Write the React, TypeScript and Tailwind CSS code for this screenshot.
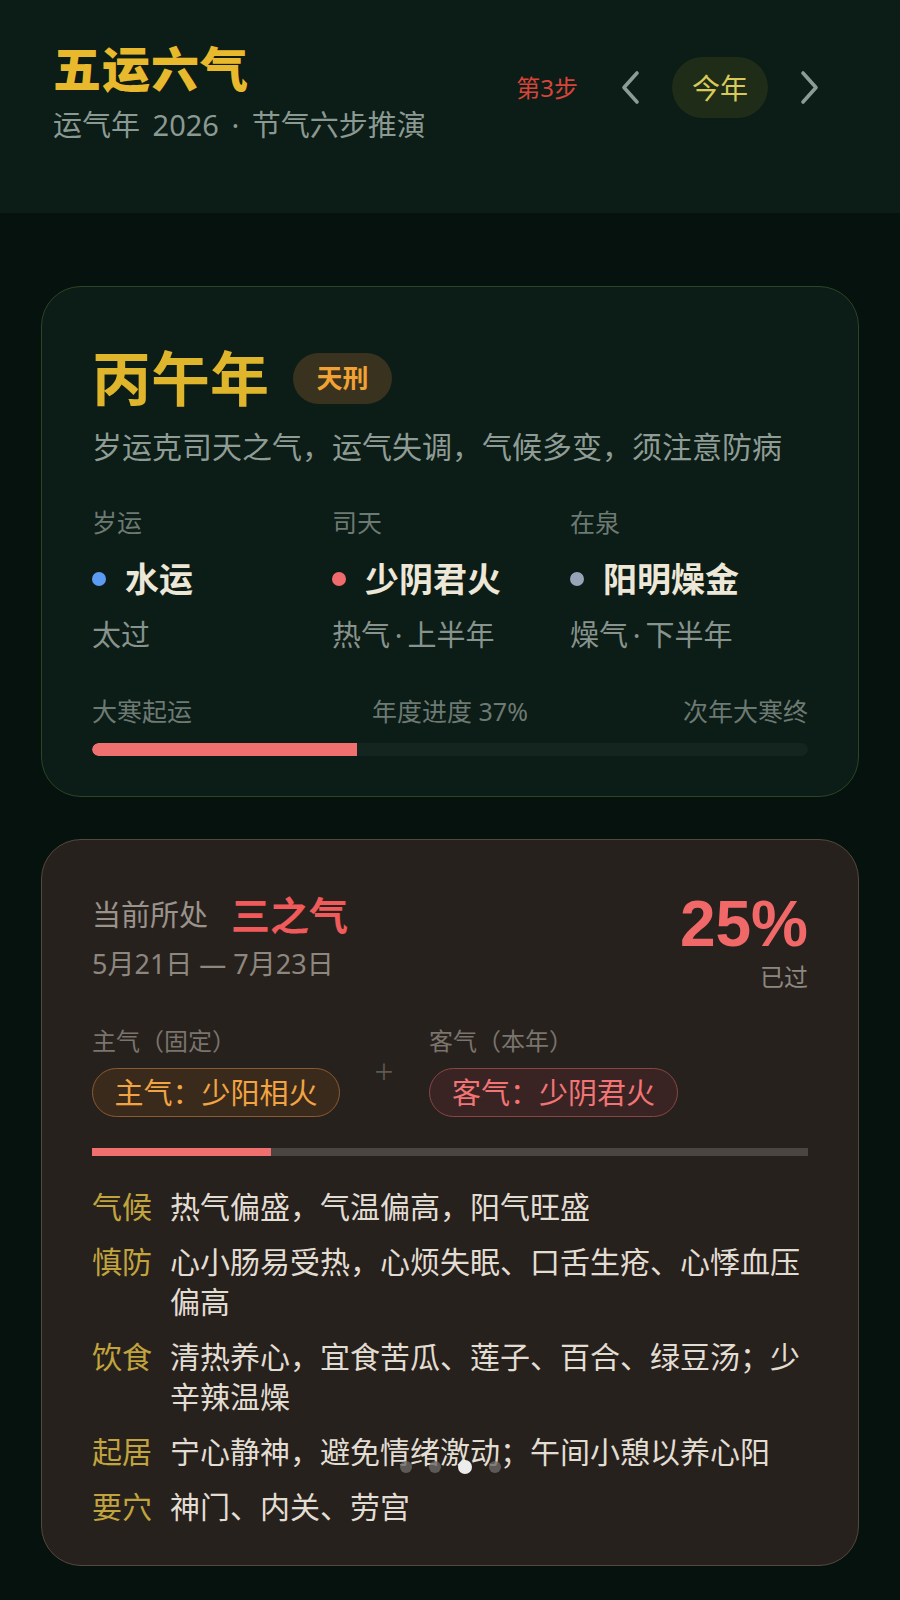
import React from 'react';

const cjk = "font-['Noto_Sans','Noto_Sans_CJK_SC',sans-serif]";

function Chevron({ dir }: { dir: 'left' | 'right' }) {
    const d = dir === 'left' ? 'M17 3 L4 17.5 L17 32' : 'M3 3 L16 17.5 L3 32';
    return (
        <svg width="20" height="35" viewBox="0 0 20 35" fill="none">
            <path d={d} stroke="#8b9c96" strokeWidth="3.6" strokeLinecap="round" strokeLinejoin="round" />
        </svg>
    );
}

const yearItems = [
    { label: '岁运', dot: 'bg-[#5b9cf2]', value: '水运', sub: '太过' },
    { label: '司天', dot: 'bg-[#f06b6b]', value: '少阴君火', sub: '热气\u2009·\u2009上半年' },
    { label: '在泉', dot: 'bg-[#97a3b6]', value: '阳明燥金', sub: '燥气\u2009·\u2009下半年' },
];

const advice = [
    { label: '气候', text: '热气偏盛，气温偏高，阳气旺盛' },
    { label: '慎防', text: '心小肠易受热，心烦失眠、口舌生疮、心悸血压偏高' },
    { label: '饮食', text: '清热养心，宜食苦瓜、莲子、百合、绿豆汤；少辛辣温燥' },
    { label: '起居', text: '宁心静神，避免情绪激动；午间小憩以养心阳' },
    { label: '要穴', text: '神门、内关、劳宫' },
];

export default function App() {
    return (
        <div className={`relative min-h-[1600px] bg-[#06120e] ${cjk}`}>
            {/* top bar */}
            <header className="h-[213px] bg-[#0c1c16] flex items-start justify-between pl-[53px] pr-[80px]">
                <div className="pt-[45px]">
                    <h1 className="text-[48px] leading-[48px] font-black text-[#e8b92c] tracking-[1px]">五运六气</h1>
                    <p className="mt-[14px] text-[29px] leading-[36px] text-[#8a9a92] [word-spacing:5px]">运气年 2026 · 节气六步推演</p>
                </div>
                <div className="pt-[57px] flex items-center">
                    <span className="text-[24px] leading-[61px] text-[#d8443a]">第3步</span>
                    <button className="ml-[42px] flex items-center">
                        <Chevron dir="left" />
                    </button>
                    <div className="ml-[32px] w-[96px] h-[61px] rounded-full bg-[#1f2c17] flex items-center justify-center text-[28px] text-[#d8c95a]">
                        今年
                    </div>
                    <button className="ml-[32px] flex items-center">
                        <Chevron dir="right" />
                    </button>
                </div>
            </header>

            {/* year card */}
            <section className="mx-[41px] mt-[73px] rounded-[40px] border-[1.5px] border-[#2c4527] bg-[#0c1c16] px-[50px] pt-[62px] pb-[40px]">
                <div className="flex items-center">
                    <h2 className="text-[59px] leading-[58px] font-bold text-[#dfb52c]">丙午年</h2>
                    <span className="ml-[24px] w-[99px] h-[51px] rounded-full bg-[#38321f] flex items-center justify-center text-[26px] font-bold text-[#f2a232]">
                        天刑
                    </span>
                </div>
                <p className="mt-[21px] text-[30px] leading-[38px] text-[#8f9c95]">岁运克司天之气，运气失调，气候多变，须注意防病</p>

                <div className="mt-[41px] grid grid-cols-[240px_238px_1fr]">
                    {yearItems.map((it) => (
                        <div key={it.label}>
                            <div className="text-[25px] leading-[30px] text-[#6c7a73]">{it.label}</div>
                            <div className="mt-[22px] flex items-center h-[40px]">
                                <span className={`w-[14px] h-[14px] rounded-full ${it.dot}`} />
                                <span className="ml-[19px] text-[34px] leading-[40px] font-bold text-[#ede7d8]">{it.value}</span>
                            </div>
                            <div className="mt-[18px] text-[29px] leading-[36px] text-[#87938c]">{it.sub}</div>
                        </div>
                    ))}
                </div>

                <div className="mt-[43px] grid grid-cols-3 text-[25px] leading-[30px] text-[#6c7a73]">
                    <span>大寒起运</span>
                    <span className="text-center">年度进度 37%</span>
                    <span className="text-right">次年大寒终</span>
                </div>
                <div className="mt-[17px] h-[13px] rounded-full bg-[#13251e] overflow-hidden">
                    <div className="h-full bg-[#f07070] rounded-l-full" style={{ width: '37%' }} />
                </div>
            </section>

            {/* current step card */}
            <section className="mx-[41px] mt-[42px] rounded-[40px] border-[1.5px] border-[#55473d] bg-[#27211d] px-[50px] pt-[49px] pb-[38px]">
                <div className="flex items-start justify-between">
                    <div className="mt-[3px]">
                        <div className="flex items-center h-[46px]">
                            <span className="text-[29px] text-[#9a938b]">当前所处</span>
                            <span className="ml-[23px] text-[39px] font-bold text-[#f05a5a]">三之气</span>
                        </div>
                        <div className="mt-[8px] text-[27px] leading-[36px] text-[#8e8780]">5月21日 — 7月23日</div>
                    </div>
                    <div className="pt-[3px] flex flex-col items-end">
                        <div className="font-['Liberation_Sans',sans-serif] text-[64px] leading-[64px] font-bold text-[#f06868]">25%</div>
                        <div className="mt-[5px] text-[24px] leading-[32px] text-[#8e8780]">已过</div>
                    </div>
                </div>

                <div className="mt-[32px] flex items-start">
                    <div className="w-[270px]">
                        <div className="text-[24px] leading-[32px] text-[#7a746d]">主气（固定）</div>
                        <div className="mt-[11px] w-[248px] h-[49px] rounded-full border-[1.5px] border-[#8c5a32] bg-[#3a2a1c] flex items-center justify-center text-[29px] text-[#f2a342]">
                            主气：少阳相火
                        </div>
                    </div>
                    <div className="w-[44px] mt-[30px] text-center text-[34px] leading-[32px] font-light text-[#5e5852]">+</div>
                    <div className="ml-[23px]">
                        <div className="text-[24px] leading-[32px] text-[#7a746d]">客气（本年）</div>
                        <div className="mt-[11px] w-[249px] h-[49px] rounded-full border-[1.5px] border-[#8a4646] bg-[#3a2323] flex items-center justify-center text-[29px] text-[#f27474]">
                            客气：少阴君火
                        </div>
                    </div>
                </div>

                <div className="mt-[31px] h-[8px] bg-[#4a4541]">
                    <div className="h-full bg-[#f07070]" style={{ width: '25%' }} />
                </div>

                <div className="mt-[31px] flex flex-col gap-[15px]">
                    {advice.map((a) => (
                        <div key={a.label} className="flex items-start text-[30px] leading-[40px]">
                            <span className="w-[78px] shrink-0 text-[#c2a43e]">{a.label}</span>
                            <span className="text-[#e2ddd3]">{a.text}</span>
                        </div>
                    ))}
                </div>
            </section>

            {/* page dots */}
            <div className="absolute left-0 right-0 top-[1460px] flex items-center justify-center gap-[17px]">
                <span className="w-[12px] h-[12px] rounded-full bg-[#6b6865]/80" />
                <span className="w-[12px] h-[12px] rounded-full bg-[#6b6865]/80" />
                <span className="w-[14px] h-[14px] rounded-full bg-[#ececec]" />
                <span className="w-[12px] h-[12px] rounded-full bg-[#6b6865]/80" />
            </div>
        </div>
    );
}
